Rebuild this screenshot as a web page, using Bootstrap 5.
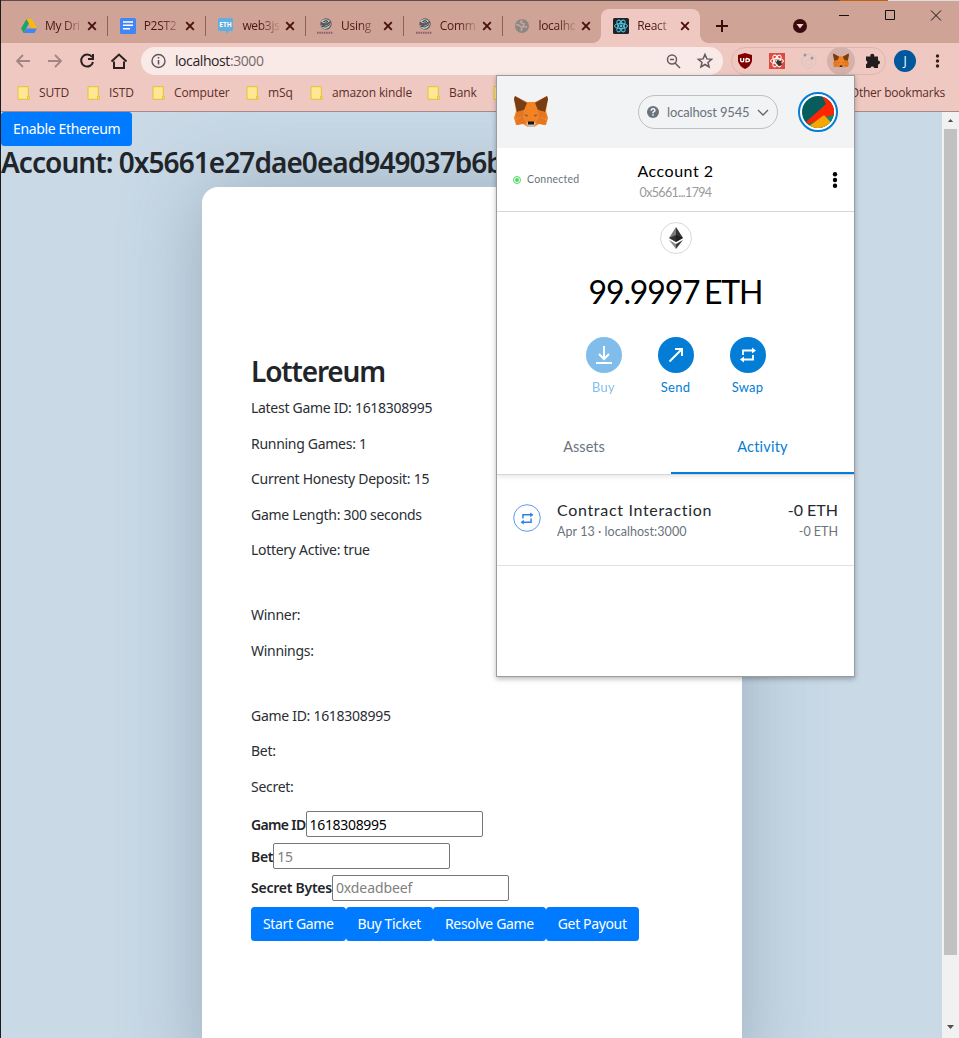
<!DOCTYPE html>
<html lang="en">
<head>
<meta charset="utf-8">
<title>Lottereum</title>
<link href="https://cdn.jsdelivr.net/npm/bootstrap@5.3.0/dist/css/bootstrap.min.css" rel="stylesheet">
<style>
html,body{height:1038px;overflow:hidden}
body{background:#c9d9e6;font-family:"Noto Sans",sans-serif;font-size:14px;color:#212529;line-height:21px}
svg{display:block;flex:none}
.browser{height:1038px;border-left:1px solid #1c1c1e;position:relative;overflow:hidden}
.desk-edge{height:1px;margin-left:-1px;background:linear-gradient(90deg,#5e4c4a 840px,#c2620c 840px 888px,#ddd 888px)}
.tabstrip{height:42px;background:#cfa497;padding-left:8px}
.tabitem{width:98.7px;height:34px;margin-top:8px;padding-left:12px;font:12px/34px "Open Sans",sans-serif;letter-spacing:-.3px;color:#4a1513}
.tabitem .cap{width:37px;margin-left:8px;white-space:nowrap;-webkit-mask:linear-gradient(90deg,#000 50%,rgba(0,0,0,.15));mask:linear-gradient(90deg,#000 50%,rgba(0,0,0,.15))}
.tabitem .shut{margin-left:6px}
.tabitem .rule{width:1px;height:20px;background:#8f6159;margin-left:10px;flex:none}
.tabitem.on{background:#efc9c1;border-radius:8px 8px 0 0;position:relative}
.tabitem.on::before,.tabitem.on::after{content:"";position:absolute;bottom:0;width:8px;height:8px}
.tabitem.on::before{left:-8px;background:radial-gradient(circle at 0 0,transparent 7.5px,#efc9c1 8px)}
.tabitem.on::after{right:-8px;background:radial-gradient(circle at 100% 0,transparent 7.5px,#efc9c1 8px)}
.toolbar{height:36px;background:#efc9c1;padding-left:14px}
.omnibox{width:582px;height:28px;border-radius:14px;background:#f9eae8;margin-left:13px;padding:0 8px 0 9px;font:14px/28px "Open Sans",sans-serif;letter-spacing:-.42px;color:#2b2527}
.omnibox .url{margin-left:9px}
.omnibox span{color:#75696a}
.extbar{width:155px;height:28px;border:1px solid #dcb6af;border-radius:14px;margin-left:8px;padding-left:5px}
.fox-hit{width:28px;height:28px;border-radius:50%;background:#d4b2ab;margin-left:10px}
.puzzle{margin-left:10px}
.profile{width:22px;height:22px;border-radius:50%;background:#01579b;color:#fff;font:12px/22px "Open Sans",sans-serif;margin-left:8px}
.bookmarks{height:33px;background:#efc9c1;border-bottom:1px solid #a5898a;font:12px/26px "Open Sans",sans-serif;color:#5a2e2a;letter-spacing:-.12px;padding:0 14px 5px 16px}
.bookmarks .marks{display:grid;grid-template-columns:70px 65px 94px 64px 117px 66px 20px}
.bookmarks .marks span{margin-left:9px}
.bookmarks .others{letter-spacing:-.02px}
.viewport{height:926px;overflow:hidden}
.btn-eth{background:#007bff;color:#fff;font-family:"Noto Sans",sans-serif;font-size:14px;line-height:20px;padding:7px 12px;border:0;border-radius:3.5px;height:34px;white-space:nowrap;letter-spacing:-.36px}
.head{font-weight:600;font-family:"Noto Sans",sans-serif;font-size:28px;line-height:33px;margin:0;white-space:nowrap;letter-spacing:-.95px}
.head.brand{margin-bottom:9px;letter-spacing:-1.15px}
.game{width:540px;height:900px;margin:8px 0 0 201px;border-radius:16px;background:#fff;box-shadow:0 0 80px rgba(70,95,120,.36);padding:168px 49px 0}
.game p{margin:0 0 14.5px;color:#2a2e33;letter-spacing:-.29px}
.game p.gap-before{margin-top:44px}
.game p.last{margin-bottom:12px}
.entry{height:31.7px;font-weight:600;letter-spacing:-.65px}
.entry.long{letter-spacing:-.25px}
.entry.short{letter-spacing:-.3px}
.entry input{height:26px;width:177px;border:1px solid #767676;border-radius:2px;padding:1px 3px;font:14px "Noto Sans",sans-serif;color:#000;letter-spacing:-.32px}
.entry.short input,.entry.long input{letter-spacing:-.1px}
.entry input::placeholder{color:#808080;opacity:1}
.deed{margin-top:3px}
.scroller{width:17px;background:#f1f1f1;padding:4px 2px}
.scroller .thumb{width:13px;height:826px;background:#c1c1c1;margin-top:7px}
.wallet{position:absolute;left:495px;top:75px;width:359px;height:602px;background:#fff;border:1px solid #9b9c9e;box-shadow:0 2px 5px rgba(0,0,0,.28);font-family:Lato,sans-serif;color:#000;z-index:3}
.w-head{height:72px;background:#f2f3f4;padding:0 16px 0 17px}
.net{width:140px;height:34px;border:1px solid #bbc0c5;border-radius:17px;font-size:13px;letter-spacing:-.15px;color:#6a737d;padding:0 8px}
.avatar{width:40px;height:40px;margin-left:20px}
.w-acct{height:64px;border-bottom:1px solid #d2d8dd}
.acname{font-size:16px;line-height:22px;letter-spacing:.5px;margin-top:3px}
.addr{font-size:12.5px;line-height:20px;color:#989a9b;letter-spacing:-.65px;margin-top:1px}
.conn{font-size:10.5px;color:#6a737d;letter-spacing:.24px}
.conn span{margin-left:6px}
.w-bal{height:209px}
.coin{width:32px;height:32px;border:1px solid #d6d9dc;border-radius:50%;margin-top:10px}
.amount{font-size:32px;line-height:40px;margin-top:18px;letter-spacing:-1.15px;word-spacing:-2.5px}
.acts{margin-top:25px}
.act{width:72px;font-size:13px;line-height:18px;color:#037dd6;letter-spacing:.25px}
.act i{width:36px;height:36px;border-radius:50%;background:#037dd6;margin-bottom:5px}
.w-tabs{height:54px;border-bottom:1px solid #d2d6da;box-shadow:0 2px 5px rgba(0,0,0,.09);clip-path:inset(0 0 -8px 0);font-size:14.5px;line-height:51px;color:#6a737d}
.w-tabs .sel{width:183px;color:#037dd6;border-bottom:2px solid #037dd6;letter-spacing:.2px}
.w-row{height:91px;border-bottom:1px solid #dfe2e5;padding:0 16px}
.swapring{margin-top:-5px}
.ttl{font-size:16px;line-height:22px;color:#24292e;margin-top:2px}
.ttl .t1{letter-spacing:.68px}
.dim{color:#6a737d;font-size:12.5px;line-height:22px}
.dim .t2{letter-spacing:.05px}
</style>
</head>
<body>
<svg width="0" height="0" class="position-absolute">
<defs>
<symbol id="fox" viewBox="0 0 34 32"><path d="M1 0l12 6h8L33 0l1 3-2 12 2 7-2 7-7-1-5 3h-6l-5-3-7 1-2-7 2-7L0 3z" fill="#f38322"/><path d="M1 0l12 7-3 7-7 2L0 3zM33 0L21 7l3 7 7 2 3-13z" fill="#763d16"/><path d="M3 16l7-2-1 7-8 1zM31 16l-7-2 1 7 8 1zM2 24l7-3 3 6-9 2zM32 24l-7-3-3 6 9 2z" fill="#e27625"/><path d="M10 18.500l4 .5-1 1.800zM24 18.500l-4 .5 1 1.800z" fill="#6f5a55"/><path d="M12 27l2-1h6l2 1-2 4h-6z" fill="#cbbdb4"/><path d="M14 25.500h6v3h-6z" fill="#161616"/></symbol>
<symbol id="folder" viewBox="0 0 13 14"><path d="M1 .7h10.300v9.800h1v2.800H1z" fill="#ffe793" stroke="#e6c034"/><path d="M10.500 13.300v-2.800h1.500" fill="none" stroke="#e6c034"/></symbol>
<symbol id="x" viewBox="0 0 10 10"><path d="M1.200 1.200l7.600 7.600m0-7.600L1.200 8.800" stroke="#4a0f0e" stroke-width="1.900"/></symbol>
<symbol id="truffle" viewBox="0 0 16 16"><circle cx="9" cy="6" r="5.700" fill="#6b5158"/><path d="M4 3.500q4-4 9-.5-4 4-9 .5zM3.800 7q4 3 10-2 0 5-6 6-3-1-4-4z" fill="#a8e6dc"/><path d="M6.500 3.500q2.500-2 4.500 0-2 1.500-4.500 0zM5 8.500q4 2 8-2" stroke="#4b3238" fill="none"/><path d="M0 14.700h16" stroke="#8b6168" stroke-width="2" stroke-dasharray="1.600 .7"/></symbol>
<symbol id="react" viewBox="0 0 16 16"><g fill="none" stroke="currentColor"><ellipse cx="8" cy="8" rx="6.500" ry="2.600"/><ellipse cx="8" cy="8" rx="6.500" ry="2.600" transform="rotate(60 8 8)"/><ellipse cx="8" cy="8" rx="6.500" ry="2.600" transform="rotate(120 8 8)"/></g><circle cx="8" cy="8" r="1.400" fill="currentColor"/></symbol>
<symbol id="swap" viewBox="0 0 16 16"><path d="M3 8V3.500h10M13 8v4.500H3" fill="none" stroke="currentColor" stroke-width="1.800"/><path d="M12 .5l4 3-4 3zM4 9.500l-4 3 4 3z" fill="currentColor"/></symbol>
</defs></svg>
<div class="browser">
  <div class="desk-edge"></div>
  <div class="tabstrip d-flex position-relative">
    <div class="tabitem d-flex align-items-center flex-shrink-0"><svg width="16" height="16" viewBox="0 0 16 16"><path d="M5.500 1L0 10.500 2.600 15 8 5.500z" fill="#1fa463"/><path d="M5.500 1h5L16 10.500h-5z" fill="#ffba00"/><path d="M2.600 15L5.300 10.500H16L13.400 15z" fill="#4285f4"/></svg><span class="cap">My Dri</span><svg class="shut" width="10" height="10"><use href="#x"/></svg><span class="rule"></span></div>
    <div class="tabitem d-flex align-items-center flex-shrink-0"><svg width="16" height="16" viewBox="0 0 16 16"><rect width="16" height="16" rx="1.500" fill="#4285f4"/><path d="M3 4h10M3 7.300h10M3 10.700h7" stroke="#fff" stroke-width="1.500"/></svg><span class="cap">P2ST2</span><svg class="shut" width="10" height="10"><use href="#x"/></svg><span class="rule"></span></div>
    <div class="tabitem d-flex align-items-center flex-shrink-0"><svg width="16" height="16" viewBox="0 0 16 16"><path d="M1.500 0h12q1.500 0 1.500 1.500v10q0 1.500-1.500 1.500H11l-2 3-1-3H1.500Q0 13 0 11.500v-10Q0 0 1.500 0z" fill="#62aee0"/><text x="7.500" y="9" font-size="6.500" font-weight="700" fill="#fff" text-anchor="middle" letter-spacing="0">ETH</text></svg><span class="cap">web3js</span><svg class="shut" width="10" height="10"><use href="#x"/></svg><span class="rule"></span></div>
    <div class="tabitem d-flex align-items-center flex-shrink-0"><svg width="16" height="16"><use href="#truffle"/></svg><span class="cap">Using</span><svg class="shut" width="10" height="10"><use href="#x"/></svg><span class="rule"></span></div>
    <div class="tabitem d-flex align-items-center flex-shrink-0"><svg width="16" height="16"><use href="#truffle"/></svg><span class="cap">Comm</span><svg class="shut" width="10" height="10"><use href="#x"/></svg><span class="rule"></span></div>
    <div class="tabitem d-flex align-items-center flex-shrink-0"><svg width="16" height="16" viewBox="0 0 16 16"><circle cx="8" cy="8" r="7" fill="#8b8784"/><path d="M2 6.500l3.500 1L8 10l-1 3M8 2L6.500 4.500 10 6l-1 2.500 4 .5" fill="none" stroke="#cfa497" stroke-width="1.500"/></svg><span class="cap">localho</span><svg class="shut" width="10" height="10"><use href="#x"/></svg></div>
    <div class="tabitem on d-flex align-items-center flex-shrink-0"><svg width="16" height="16" color="#4fc6e0"><rect width="16" height="16" rx="1.500" fill="#20232a"/><use href="#react"/></svg><span class="cap">React</span><svg class="shut" width="10" height="10"><use href="#x"/></svg></div>
    <svg class="ms-auto" width="249" height="42" viewBox="0 0 249 42"><path d="M6 25h12M12 19v12" stroke="#3b0a0a" stroke-width="2"/><circle cx="90" cy="25" r="7" fill="#3b0a0a"/><path d="M86.500 23h7L90 27.500z" fill="#efd3cc"/><path d="M129 14.500h10M175.500 9.500h9v9h-9zM221 9.500l10 10m0-10l-10 10" fill="none" stroke="#111"/></svg>
  </div>
  <div class="toolbar d-flex align-items-center">
    <svg width="113" height="20" viewBox="0 0 113 20" fill="none" stroke="#a18682" stroke-width="1.800"><path d="M15 10H2m6-6L2 10l6 6M33 10h13m-6-6l6 6-6 6"/><path d="M77 6A6 6 0 1 0 78 11M78 3v5h-5" stroke="#2c2020" stroke-width="2"/><path d="M99 10.500V17h10v-6.500M96.500 10.500L104 3.500l7.500 7" stroke="#2c2020" stroke-width="2"/></svg>
    <div class="omnibox d-flex align-items-center flex-shrink-0"><svg width="16" height="16" viewBox="0 0 16 16" fill="none" stroke="#5f5657" stroke-width="1.400"><circle cx="8.500" cy="8" r="6.500"/><path d="M8.500 7v4.500M8.500 4v1.600" stroke-width="1.600"/></svg><div class="url">localhost<span>:3000</span></div>
      <svg class="ms-auto" width="50" height="18" viewBox="0 0 50 18" fill="none" stroke="#655b5c" stroke-width="1.500"><circle cx="7" cy="7.500" r="4.500"/><path d="M10 11l5 5M5 7.500h4M40 2.500l1.900 4.400 4.700.4-3.600 3.100 1.100 4.600-4.100-2.500-4.100 2.500 1.100-4.600-3.600-3.100 4.700-.4z"/></svg></div>
    <div class="extbar d-flex align-items-center flex-shrink-0">
      <svg width="16" height="16" viewBox="0 0 16 16"><path d="M8 0l7 2v6q-1 5-7 8-6-3-7-8V2z" fill="#800000"/><path d="M3.700 5v2.500q0 1.300 1.500 1.300t1.500-1.300V5M9 5.500v3.300q3.500 0 3.500-1.600T9 5.500" fill="none" stroke="#fff" stroke-width="1.300"/></svg>
      <svg class="ms-3" width="16" height="16" color="#fff"><rect width="16" height="16" fill="#dd4b3e"/><use href="#react"/><path d="M8 7l4 1 1 4-3 1-3-3z" fill="#333"/></svg>
      <svg class="ms-3" width="16" height="16" viewBox="0 0 16 16" fill="none" stroke="#cfc8c4"><circle cx="8" cy="8" r="7"/><circle cx="8" cy="9" r="3" stroke-dasharray="2 1"/><circle cx="4" cy="2" r="1.500" fill="#999" stroke="none"/><circle cx="11" cy="5" r="1.500" fill="#999" stroke="none"/></svg>
      <div class="fox-hit d-flex align-items-center justify-content-center flex-shrink-0"><svg width="16" height="16"><use href="#fox"/></svg></div>
      <svg class="puzzle" width="16" height="16" viewBox="0 0 16 16"><path d="M1 3.500h4.500a2 2 0 1 1 3.600 0H13v4a2 2 0 1 1 0 4v3.500H9.200a2 2 0 0 0-3.800 0H1v-3.800a2 2 0 0 0 0-3.800z" fill="#221c1d"/></svg>
    </div>
    <div class="profile text-center flex-shrink-0">J</div>
    <svg width="42" height="16" viewBox="0 0 42 16" fill="#30201f"><circle cx="21.500" cy="3" r="1.700"/><circle cx="21.500" cy="8" r="1.700"/><circle cx="21.500" cy="13" r="1.700"/></svg>
  </div>
  <div class="bookmarks d-flex align-items-center justify-content-between">
    <div class="marks">
      <div class="d-flex align-items-center"><svg width="13" height="14"><use href="#folder"/></svg><span>SUTD</span></div>
      <div class="d-flex align-items-center"><svg width="13" height="14"><use href="#folder"/></svg><span>ISTD</span></div>
      <div class="d-flex align-items-center"><svg width="13" height="14"><use href="#folder"/></svg><span>Computer</span></div>
      <div class="d-flex align-items-center"><svg width="13" height="14"><use href="#folder"/></svg><span>mSq</span></div>
      <div class="d-flex align-items-center"><svg width="13" height="14"><use href="#folder"/></svg><span class="text-nowrap">amazon kindle</span></div>
      <div class="d-flex align-items-center"><svg width="13" height="14"><use href="#folder"/></svg><span>Bank</span></div>
      <div class="d-flex align-items-center"><svg width="13" height="14"><use href="#folder"/></svg></div>
    </div>
    <span style="letter-spacing:-.22px">Other bookmarks</span>
  </div>
  <div class="viewport d-flex">
    <main class="flex-grow-1 overflow-hidden">
      <button class="btn-eth d-block">Enable Ethereum</button>
      <h1 class="head">Account: 0x5661e27dae0ead949037b6b</h1>
      <section class="game">
        <h1 class="head brand">Lottereum</h1>
        <p>Latest Game ID: 1618308995</p><p>Running Games: 1</p><p>Current Honesty Deposit: 15</p><p>Game Length: 300 seconds</p><p>Lottery Active: true</p>
        <p class="gap-before">Winner:</p><p>Winnings:</p>
        <p class="gap-before">Game ID: 1618308995</p><p>Bet:</p><p class="last">Secret:</p>
        <div class="entry d-flex align-items-center"><label>Game ID</label><input value="1618308995"></div>
        <div class="entry short d-flex align-items-center"><label>Bet</label><input placeholder="15"></div>
        <div class="entry long d-flex align-items-center"><label>Secret Bytes</label><input placeholder="0xdeadbeef"></div>
        <div class="deed d-flex"><button class="btn-eth">Start Game</button><button class="btn-eth">Buy Ticket</button><button class="btn-eth">Resolve Game</button><button class="btn-eth">Get Payout</button></div>
      </section>
    </main>
    <div class="scroller d-flex flex-column align-items-center flex-shrink-0"><svg width="7" height="6"><path d="M0 6l3.500-4L7 6z" fill="#505050" transform="translate(0 1)"/></svg><div class="thumb"></div><svg class="mt-auto mb-1" width="7" height="5"><path d="M0 0h7L3.500 4z" fill="#505050"/></svg></div>
  </div>

  <aside class="wallet">
    <div class="w-head d-flex align-items-center"><svg width="34" height="32"><use href="#fox"/></svg>
      <div class="net d-flex align-items-center ms-auto"><svg width="12" height="12" viewBox="0 0 12 12"><circle cx="6" cy="6" r="6" fill="#6a737d"/><path d="M4 4.700q.2-1.900 2-1.900t2 1.600q0 1-2 1.900v1M6 8.300v1.500" fill="none" stroke="#fff" stroke-width="1.400"/></svg><span class="ms-2 text-nowrap">localhost 9545</span><svg class="ms-auto" width="12" height="7"><path d="M1 1l5 5 5-5" fill="none" stroke="#5d666f" stroke-width="1.300"/></svg></div>
      <svg class="avatar" viewBox="0 0 40 40"><defs><clipPath id="av"><circle cx="20" cy="20" r="16"/></clipPath></defs><circle cx="20" cy="20" r="19" fill="#fff" stroke="#037dd6" stroke-width="2"/><g clip-path="url(#av)"><path d="M0 0h40v40H0z" fill="#075c5e"/><path d="M22 0h18v22L8 33 9 29 28 12z" fill="#fc2403"/><path d="M8 33L40 21v19z" fill="#02907d"/><path d="M10 35l16-12 12 13-10 4z" fill="#f6a602"/></g></svg></div>
    <div class="w-acct d-flex align-items-center position-relative justify-content-center text-center">
      <div class="position-absolute start-0 ps-3 d-flex align-items-center conn"><svg width="8" height="8" viewBox="0 0 8 8"><circle cx="4" cy="4" r="3.500" fill="none" stroke="#4cd964"/><circle cx="4" cy="4" r="2" fill="#4cd964"/></svg><span>Connected</span></div>
      <div><div class="acname">Account 2</div><div class="addr">0x5661...1794</div></div>
      <svg class="position-absolute end-0 me-3" width="6" height="16" viewBox="0 0 6 16"><circle cx="3" cy="2.300" r="2.200"/><circle cx="3" cy="8" r="2.200"/><circle cx="3" cy="13.700" r="2.200"/></svg>
    </div>
    <div class="w-bal d-flex flex-column align-items-center">
      <div class="coin d-flex align-items-center justify-content-center"><svg width="14" height="22" viewBox="0 0 14 22"><path d="M7 0v15L0 11z" fill="#7a7a7a"/><path d="M7 0l7 11-7 4z" fill="#333"/><path d="M0 11l7-3 7 3-7 4z" fill="#191919" opacity=".75"/><path d="M0 13l7 4v5z" fill="#8a8a8a"/><path d="M14 13l-7 4v5z" fill="#3b3b3b"/></svg></div>
      <div class="amount text-nowrap">99.9997 ETH</div>
      <div class="d-flex text-center acts">
        <div class="act opacity-50"><i class="d-flex align-items-center justify-content-center mx-auto"><svg width="18" height="20" fill="none" stroke="#fff" stroke-width="2"><path d="M9 1v13M4 9l5 5 5-5M1 18h16"/></svg></i><span>Buy</span></div>
        <div class="act"><i class="d-flex align-items-center justify-content-center mx-auto"><svg width="16" height="16" fill="none" stroke="#fff" stroke-width="2"><path d="M1.500 14.500L14 2M7 2h7v7"/></svg></i><span>Send</span></div>
        <div class="act"><i class="d-flex align-items-center justify-content-center mx-auto text-white"><svg width="16" height="16"><use href="#swap"/></svg></i><span>Swap</span></div>
      </div>
    </div>
    <div class="w-tabs d-flex text-center"><div class="flex-fill">Assets</div><div class="sel">Activity</div></div>
    <div class="w-row d-flex align-items-center">
      <svg class="swapring" width="28" height="28" viewBox="0 0 28 28" color="#2f80ed"><circle cx="14" cy="14" r="13.300" fill="none" stroke="#5b9bf0"/><use href="#swap" x="7.500" y="8" width="13" height="13"/></svg>
      <div class="ms-3"><div class="ttl"><span class="t1">Contract Interaction</span></div><div class="dim"><span class="t2">Apr 13 · localhost:3000</span></div></div>
      <div class="ms-auto text-end"><div class="ttl">-0 ETH</div><div class="dim">-0 ETH</div></div>
    </div>
  </aside>
</div>
<script src="https://cdn.jsdelivr.net/npm/bootstrap@5.3.0/dist/js/bootstrap.bundle.min.js"></script>
</body>
</html>
